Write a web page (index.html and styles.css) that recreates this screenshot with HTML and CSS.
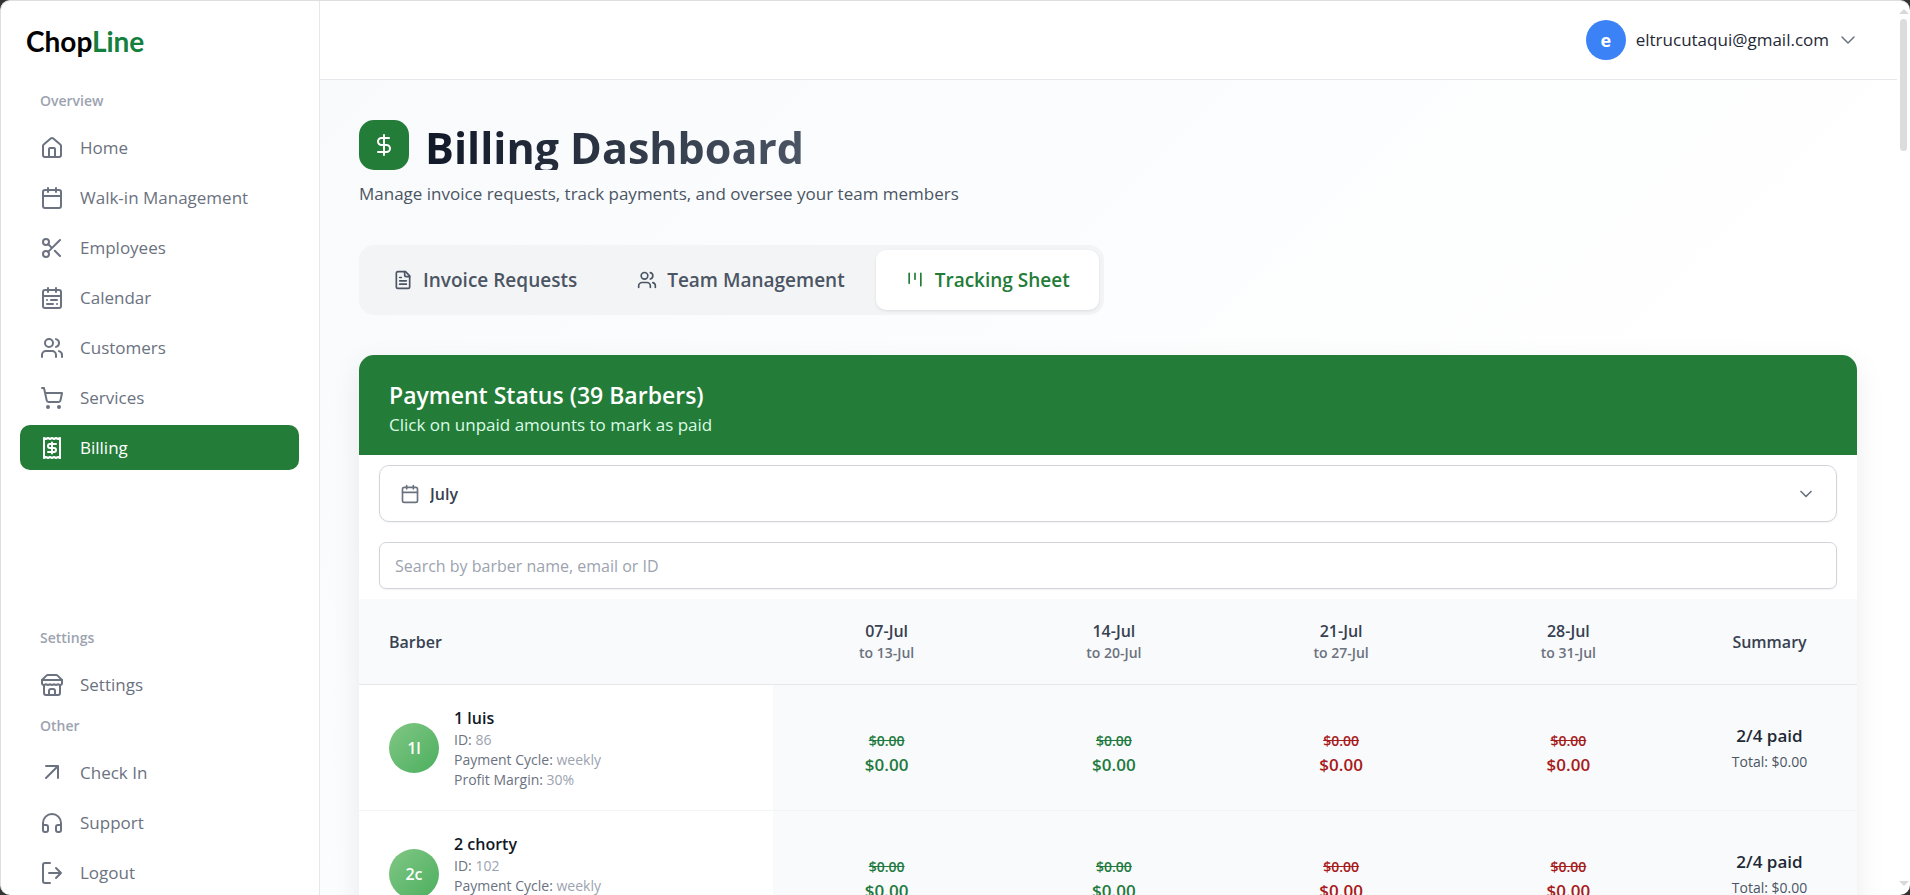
FILE: index.html
```html
<!DOCTYPE html>
<html lang="en">
<head>
    <meta charset="UTF-8">
    <title>ChopLine - Billing Dashboard</title>
    <link rel="stylesheet" href="styles.css">
</head>
<body>
    <div class="window">
        <aside class="sidebar">
            <a class="logo" href="#">Chop<span>Line</span></a>

            <nav class="nav">
                <h2 class="nav-title">Overview</h2>
                <a class="nav-link" href="#">
                    <svg class="icon" viewBox="0 0 24 24"><path d="M15 21v-8a1 1 0 0 0-1-1h-4a1 1 0 0 0-1 1v8"/><path d="M3 10a2 2 0 0 1 .7-1.5l7-6a2 2 0 0 1 2.6 0l7 6A2 2 0 0 1 21 10v9a2 2 0 0 1-2 2H5a2 2 0 0 1-2-2z"/></svg>
                    Home
                </a>
                <a class="nav-link" href="#">
                    <svg class="icon" viewBox="0 0 24 24"><path d="M8 2v4M16 2v4M3 10h18"/><rect x="3" y="4" width="18" height="18" rx="2"/></svg>
                    Walk-in Management
                </a>
                <a class="nav-link" href="#">
                    <svg class="icon" viewBox="0 0 24 24"><circle cx="6" cy="6" r="3"/><circle cx="6" cy="18" r="3"/><path d="M8.1 8.1 12 12M20 4 8.1 15.9M14.8 14.8 20 20"/></svg>
                    Employees
                </a>
                <a class="nav-link" href="#">
                    <svg class="icon" viewBox="0 0 24 24"><path d="M8 2v4M16 2v4M3 10h18"/><rect x="3" y="4" width="18" height="18" rx="2"/><path d="M17 14h-6M13 18H7M7 14h.01M17 18h.01"/></svg>
                    Calendar
                </a>
                <a class="nav-link" href="#">
                    <svg class="icon" viewBox="0 0 24 24"><path d="M16 21v-2a4 4 0 0 0-4-4H6a4 4 0 0 0-4 4v2"/><circle cx="9" cy="7" r="4"/><path d="M22 21v-2a4 4 0 0 0-3-3.870M16 3.130a4 4 0 0 1 0 7.750"/></svg>
                    Customers
                </a>
                <a class="nav-link" href="#">
                    <svg class="icon" viewBox="0 0 24 24"><circle cx="8" cy="21" r="1"/><circle cx="19" cy="21" r="1"/><path d="M2 2h2l2.700 12.400a2 2 0 0 0 2 1.600h9.800a2 2 0 0 0 2-1.600L22 7H5.100"/></svg>
                    Services
                </a>
                <a class="nav-link active" href="#">
                    <svg class="icon" viewBox="0 0 24 24"><path d="M4 2v20l2-1 2 1 2-1 2 1 2-1 2 1 2-1 2 1V2l-2 1-2-1-2 1-2-1-2 1-2-1-2 1Z"/><path d="M16 8h-6a2 2 0 1 0 0 4h4a2 2 0 1 1 0 4H8M12 17.500v-11"/></svg>
                    Billing
                </a>
            </nav>

            <nav class="nav nav-bottom">
                <h2 class="nav-title">Settings</h2>
                <a class="nav-link" href="#">
                    <svg class="icon" viewBox="0 0 24 24"><path d="m2 7 4.400-4.400A2 2 0 0 1 7.800 2h8.400a2 2 0 0 1 1.400.6L22 7"/><path d="M4 12v8a2 2 0 0 0 2 2h12a2 2 0 0 0 2-2v-8M15 22v-4a2 2 0 0 0-2-2h-2a2 2 0 0 0-2 2v4M2 7h20"/><path d="M22 7v3a2 2 0 0 1-2 2 2.700 2.700 0 0 1-1.600-.6.7.7 0 0 0-.8 0A2.700 2.700 0 0 1 16 12a2.700 2.700 0 0 1-1.600-.6.7.7 0 0 0-.8 0A2.700 2.700 0 0 1 12 12a2.700 2.700 0 0 1-1.600-.6.7.7 0 0 0-.8 0A2.700 2.700 0 0 1 8 12a2.700 2.700 0 0 1-1.600-.6.7.7 0 0 0-.8 0A2.700 2.700 0 0 1 4 12a2 2 0 0 1-2-2V7"/></svg>
                    Settings
                </a>
                <h2 class="nav-title">Other</h2>
                <a class="nav-link" href="#">
                    <svg class="icon" viewBox="0 0 24 24"><path d="M6 5h12v12M18 5 6 17"/></svg>
                    Check In
                </a>
                <a class="nav-link" href="#">
                    <svg class="icon" viewBox="0 0 24 24"><path d="M3 14h3a2 2 0 0 1 2 2v3a2 2 0 0 1-2 2H5a2 2 0 0 1-2-2v-7a9 9 0 0 1 18 0v7a2 2 0 0 1-2 2h-1a2 2 0 0 1-2-2v-3a2 2 0 0 1 2-2h3"/></svg>
                    Support
                </a>
                <a class="nav-link" href="#">
                    <svg class="icon" viewBox="0 0 24 24"><path d="M10 2H5a2 2 0 0 0-2 2v16a2 2 0 0 0 2 2h5M16 7l5 5-5 5M21 12H9"/></svg>
                    Logout
                </a>
            </nav>
        </aside>

        <div class="page">
            <header class="topbar">
                <button class="account" type="button">
                    <span class="account-avatar">e</span>
                    eltrucutaqui@gmail.com
                    <svg class="icon icon-small" viewBox="0 0 24 24"><path d="m4 8 8 8 8-8"/></svg>
                </button>
            </header>

            <main class="content">
                <div class="heading">
                    <span class="heading-icon">
                        <svg class="icon" viewBox="0 0 24 24"><path d="M12 2v20M17 5H9.500a3.500 3.500 0 0 0 0 7h5a3.500 3.500 0 0 1 0 7H6"/></svg>
                    </span>
                    <h1>Billing Dashboard</h1>
                </div>
                <p class="subtitle">Manage invoice requests, track payments, and oversee your team members</p>

                <div class="tabs">
                    <button class="tab" type="button">
                        <svg class="icon" viewBox="0 0 24 24"><path d="M15 2H6a2 2 0 0 0-2 2v16a2 2 0 0 0 2 2h12a2 2 0 0 0 2-2V7Z"/><path d="M14 2v4a2 2 0 0 0 2 2h4M10 9H8M16 13H8M16 17H8"/></svg>
                        Invoice Requests
                    </button>
                    <button class="tab" type="button">
                        <svg class="icon" viewBox="0 0 24 24"><path d="M16 21v-2a4 4 0 0 0-4-4H6a4 4 0 0 0-4 4v2"/><circle cx="9" cy="7" r="4"/><path d="M22 21v-2a4 4 0 0 0-3-3.870M16 3.130a4 4 0 0 1 0 7.750"/></svg>
                        Team Management
                    </button>
                    <button class="tab active" type="button">
                        <svg class="icon" viewBox="0 0 24 24"><path d="M5 4v12M12 4v7M19 4v15"/></svg>
                        Tracking Sheet
                    </button>
                </div>

                <section class="card">
                    <div class="card-header">
                        <h2>Payment Status (39 Barbers)</h2>
                        <p>Click on unpaid amounts to mark as paid</p>
                    </div>
                    <div class="filters">
                        <div class="month">
                            <svg class="icon icon-small" viewBox="0 0 24 24"><path d="M8 2v4M16 2v4M3 10h18"/><rect x="3" y="4" width="18" height="18" rx="2"/></svg>
                            <select class="month-select" aria-label="Month">
                                <option>June</option>
                                <option selected>July</option>
                                <option>August</option>
                            </select>
                            <svg class="icon icon-small" viewBox="0 0 24 24"><path d="m6 9 6 6 6-6"/></svg>
                        </div>
                        <input class="search" type="text" aria-label="Search barbers" placeholder="Search by barber name, email or ID">
                    </div>

                    <table class="sheet">
                        <thead>
                            <tr>
                                <th class="col-barber">Barber</th>
                                <th>07-Jul<small>to 13-Jul</small></th>
                                <th>14-Jul<small>to 20-Jul</small></th>
                                <th>21-Jul<small>to 27-Jul</small></th>
                                <th>28-Jul<small>to 31-Jul</small></th>
                                <th class="col-summary">Summary</th>
                            </tr>
                        </thead>
                        <tbody>
                            <tr>
                                <td class="col-barber">
                                    <div class="barber">
                                        <span class="barber-avatar">1l</span>
                                        <div>
                                            <div class="barber-name">1 luis</div>
                                            <div class="barber-info">ID: <span>86</span></div>
                                            <div class="barber-info">Payment Cycle: <span>weekly</span></div>
                                            <div class="barber-info">Profit Margin: <span>30%</span></div>
                                        </div>
                                    </div>
                                </td>
                                <td class="paid"><del>$0.00</del><strong>$0.00</strong></td>
                                <td class="paid"><del>$0.00</del><strong>$0.00</strong></td>
                                <td class="unpaid"><del>$0.00</del><strong>$0.00</strong></td>
                                <td class="unpaid"><del>$0.00</del><strong>$0.00</strong></td>
                                <td class="summary"><strong>2/4 paid</strong><span>Total: $0.00</span></td>
                            </tr>
                            <tr>
                                <td class="col-barber">
                                    <div class="barber">
                                        <span class="barber-avatar">2c</span>
                                        <div>
                                            <div class="barber-name">2 chorty</div>
                                            <div class="barber-info">ID: <span>102</span></div>
                                            <div class="barber-info">Payment Cycle: <span>weekly</span></div>
                                            <div class="barber-info">Profit Margin: <span>30%</span></div>
                                        </div>
                                    </div>
                                </td>
                                <td class="paid"><del>$0.00</del><strong>$0.00</strong></td>
                                <td class="paid"><del>$0.00</del><strong>$0.00</strong></td>
                                <td class="unpaid"><del>$0.00</del><strong>$0.00</strong></td>
                                <td class="unpaid"><del>$0.00</del><strong>$0.00</strong></td>
                                <td class="summary"><strong>2/4 paid</strong><span>Total: $0.00</span></td>
                            </tr>
                        </tbody>
                    </table>
                </section>
            </main>
        </div>

        <div class="scrollbar">
            <span class="scroll-up"></span>
            <span class="scroll-thumb"></span>
            <span class="scroll-down"></span>
        </div>
    </div>
</body>
</html>
```
FILE: styles.css
```css
* {
    box-sizing: border-box;
}
body {
    margin: 0;
    height: 100vh;
    overflow: hidden;
    background: #333;
    color: #111827;
    font-family: "Open Sans", "Noto Sans", sans-serif;
    font-size: 16px;
    line-height: 24px;
}
h1, h2, p {
    margin: 0;
}
button, select, input {
    font: inherit;
    color: inherit;
}
.window {
    display: flex;
    height: 100vh;
    overflow: hidden;
    border: 1px solid #dedede;
    border-bottom: none;
    border-right: none;
    border-radius: 10px;
    background: #fff;
}
.icon {
    flex: none;
    width: 24px;
    height: 24px;
    fill: none;
    stroke: currentColor;
    stroke-width: 2;
    stroke-linecap: round;
    stroke-linejoin: round;
}
.icon-small {
    width: 20px;
    height: 20px;
}

/* sidebar */
.sidebar {
    display: flex;
    flex: none;
    flex-direction: column;
    width: 319px;
    padding: 24px 20px 0 19px;
    border-right: 1px solid #e5e7eb;
}
.logo {
    padding: 0 6px;
    color: #000;
    font-family: Lato, sans-serif;
    font-size: 28px;
    font-weight: 700;
    line-height: 32px;
    text-decoration: none;
}
.logo span {
    color: #15803d;
}
.nav {
    margin-top: 30px;
}
.nav-bottom {
    margin-top: auto;
}
.nav-title {
    padding: 4px 20px 14px;
    color: #9ca3af;
    font-size: 14px;
    font-weight: 600;
    line-height: 20px;
}
.nav-link {
    display: flex;
    align-items: center;
    gap: 16px;
    height: 45px;
    margin-bottom: 5px;
    padding: 0 20px;
    border-radius: 10px;
    color: #6b7280;
    font-size: 17px;
    text-decoration: none;
}
.nav-link:last-child {
    margin-bottom: 0;
}
.nav-link.active {
    background: #237c38;
    color: #fff;
}

/* top bar */
.page {
    display: flex;
    flex: 1;
    flex-direction: column;
    min-width: 0;
}
.topbar {
    display: flex;
    flex: none;
    justify-content: flex-end;
    align-items: center;
    height: 79px;
    padding: 0 40px;
    border-bottom: 1px solid #e5e7eb;
}
.account {
    display: flex;
    align-items: center;
    gap: 10px;
    padding: 0;
    border: none;
    background: none;
    color: #1f2937;
    font-size: 17px;
    cursor: pointer;
}
.account .icon {
    width: 18px;
    color: #6b7280;
}
.account-avatar {
    display: grid;
    place-items: center;
    width: 40px;
    height: 40px;
    border-radius: 50%;
    background: #3b82f6;
    color: #fff;
    font-size: 18px;
    font-weight: 700;
}

/* page content */
.content {
    flex: 1;
    padding: 40px 40px 0 39px;
    background: linear-gradient(135deg, #f8fafc, #fff 70%);
}
.heading {
    display: flex;
    align-items: center;
    gap: 16px;
}
.heading-icon {
    display: grid;
    place-items: center;
    width: 50px;
    height: 50px;
    border-radius: 15px;
    background: #237c38;
    color: #fff;
}
.heading h1 {
    height: 50px;
    padding-top: 3px;
    background: linear-gradient(90deg, #111827, #4b5563);
    background-clip: text;
    -webkit-background-clip: text;
    color: transparent;
    font-size: 43px;
    font-weight: 700;
    line-height: 50px;
}
.subtitle {
    margin-top: 10px;
    color: #4b5563;
    font-size: 17px;
    line-height: 27px;
}
.tabs {
    display: flex;
    gap: 2px;
    width: fit-content;
    margin-top: 38px;
    padding: 5px;
    border-radius: 15px;
    background: #f3f4f6;
}
.tab {
    display: flex;
    align-items: center;
    gap: 10px;
    height: 60px;
    padding: 0 29px;
    border: none;
    border-radius: 10px;
    background: none;
    color: #4b5563;
    font-size: 19px;
    font-weight: 600;
    cursor: pointer;
}
.tab .icon {
    width: 20px;
    height: 20px;
}
.tab.active {
    background: #fff;
    box-shadow: 0 1px 3px rgba(0, 0, 0, 0.1);
    color: #237c38;
}

/* payment card */
.card {
    margin-top: 40px;
    overflow: hidden;
    border-radius: 15px;
    background: #fff;
    box-shadow: 0 10px 30px rgba(0, 0, 0, 0.08);
}
.card-header {
    padding: 25px 30px 15px;
    background: #237c38;
    color: #dcfce7;
}
.card-header h2 {
    color: #fff;
    font-size: 23px;
    font-weight: 600;
    line-height: 30px;
}
.card-header p {
    font-size: 17px;
    line-height: 30px;
}
.filters {
    display: flex;
    flex-direction: column;
    gap: 20px;
    padding: 10px 20px;
}
.month {
    display: flex;
    align-items: center;
    gap: 10px;
    height: 57px;
    padding: 0 20px;
    border: 1px solid #d1d5db;
    border-radius: 10px;
    box-shadow: 0 1px 2px rgba(0, 0, 0, 0.05);
    color: #6b7280;
}
.month-select {
    flex: 1;
    border: none;
    outline: none;
    appearance: none;
    background: none;
    color: #374151;
    font-weight: 600;
}
.search {
    height: 47px;
    padding: 0 15px;
    border: 1px solid #d1d5db;
    border-radius: 7px;
    box-shadow: 0 1px 2px rgba(0, 0, 0, 0.05);
}
.search::placeholder {
    color: #9ca3af;
}

/* tracking table */
.sheet {
    width: 100%;
    border-collapse: collapse;
    table-layout: fixed;
    background: #f9fafb;
    text-align: center;
}
.sheet th {
    height: 85px;
    padding: 2px 30px 0;
    border-bottom: 1px solid #e5e7eb;
    color: #374151;
    font-weight: 600;
    line-height: 22px;
}
.sheet small {
    display: block;
    color: #6b7280;
    font-size: 14px;
}
.sheet td {
    height: 126px;
    padding: 12px 0 0;
    border-bottom: 1px solid #f3f4f6;
}
.sheet .col-barber {
    width: 414px;
    padding: 2px 30px 0;
    text-align: left;
}
.sheet td.col-barber {
    background: #fff;
}
.sheet .col-summary {
    width: 175px;
}
.barber {
    display: flex;
    align-items: center;
    gap: 15px;
}
.barber-avatar {
    display: grid;
    place-items: center;
    width: 50px;
    height: 50px;
    border-radius: 50%;
    background: linear-gradient(135deg, #81c784, #4caf5f);
    color: #fff;
    font-weight: 600;
}
.barber-name {
    font-weight: 600;
}
.barber-info {
    color: #6b7280;
    font-size: 14px;
    line-height: 20px;
}
.barber-info span {
    color: #9ca3af;
}
.sheet del,
.sheet strong,
.summary span {
    display: block;
    font-weight: 600;
}
.sheet del {
    font-size: 14px;
}
.sheet strong {
    font-size: 17px;
}
.paid {
    color: #1f7a40;
}
.unpaid {
    color: #a61b1b;
}
.sheet td.summary {
    padding-top: 2px;
}
.sheet .summary strong {
    color: #1f2937;
    line-height: 28px;
}
.sheet .summary span {
    color: #4b5563;
    font-size: 14px;
    font-weight: 400;
}

/* scroll track */
.scrollbar {
    display: flex;
    flex: none;
    flex-direction: column;
    align-items: center;
    width: 13px;
    padding: 8px 0 9px;
}
.scroll-up,
.scroll-down {
    border: 5px solid transparent;
}
.scroll-up {
    border-top: none;
    border-bottom-color: #d9d9d9;
}
.scroll-down {
    margin-top: auto;
    border-bottom: none;
    border-top-color: #d9d9d9;
}
.scroll-thumb {
    width: 7px;
    height: 132px;
    margin-top: 5px;
    border-radius: 4px;
    background: #dcdcdc;
}
```
